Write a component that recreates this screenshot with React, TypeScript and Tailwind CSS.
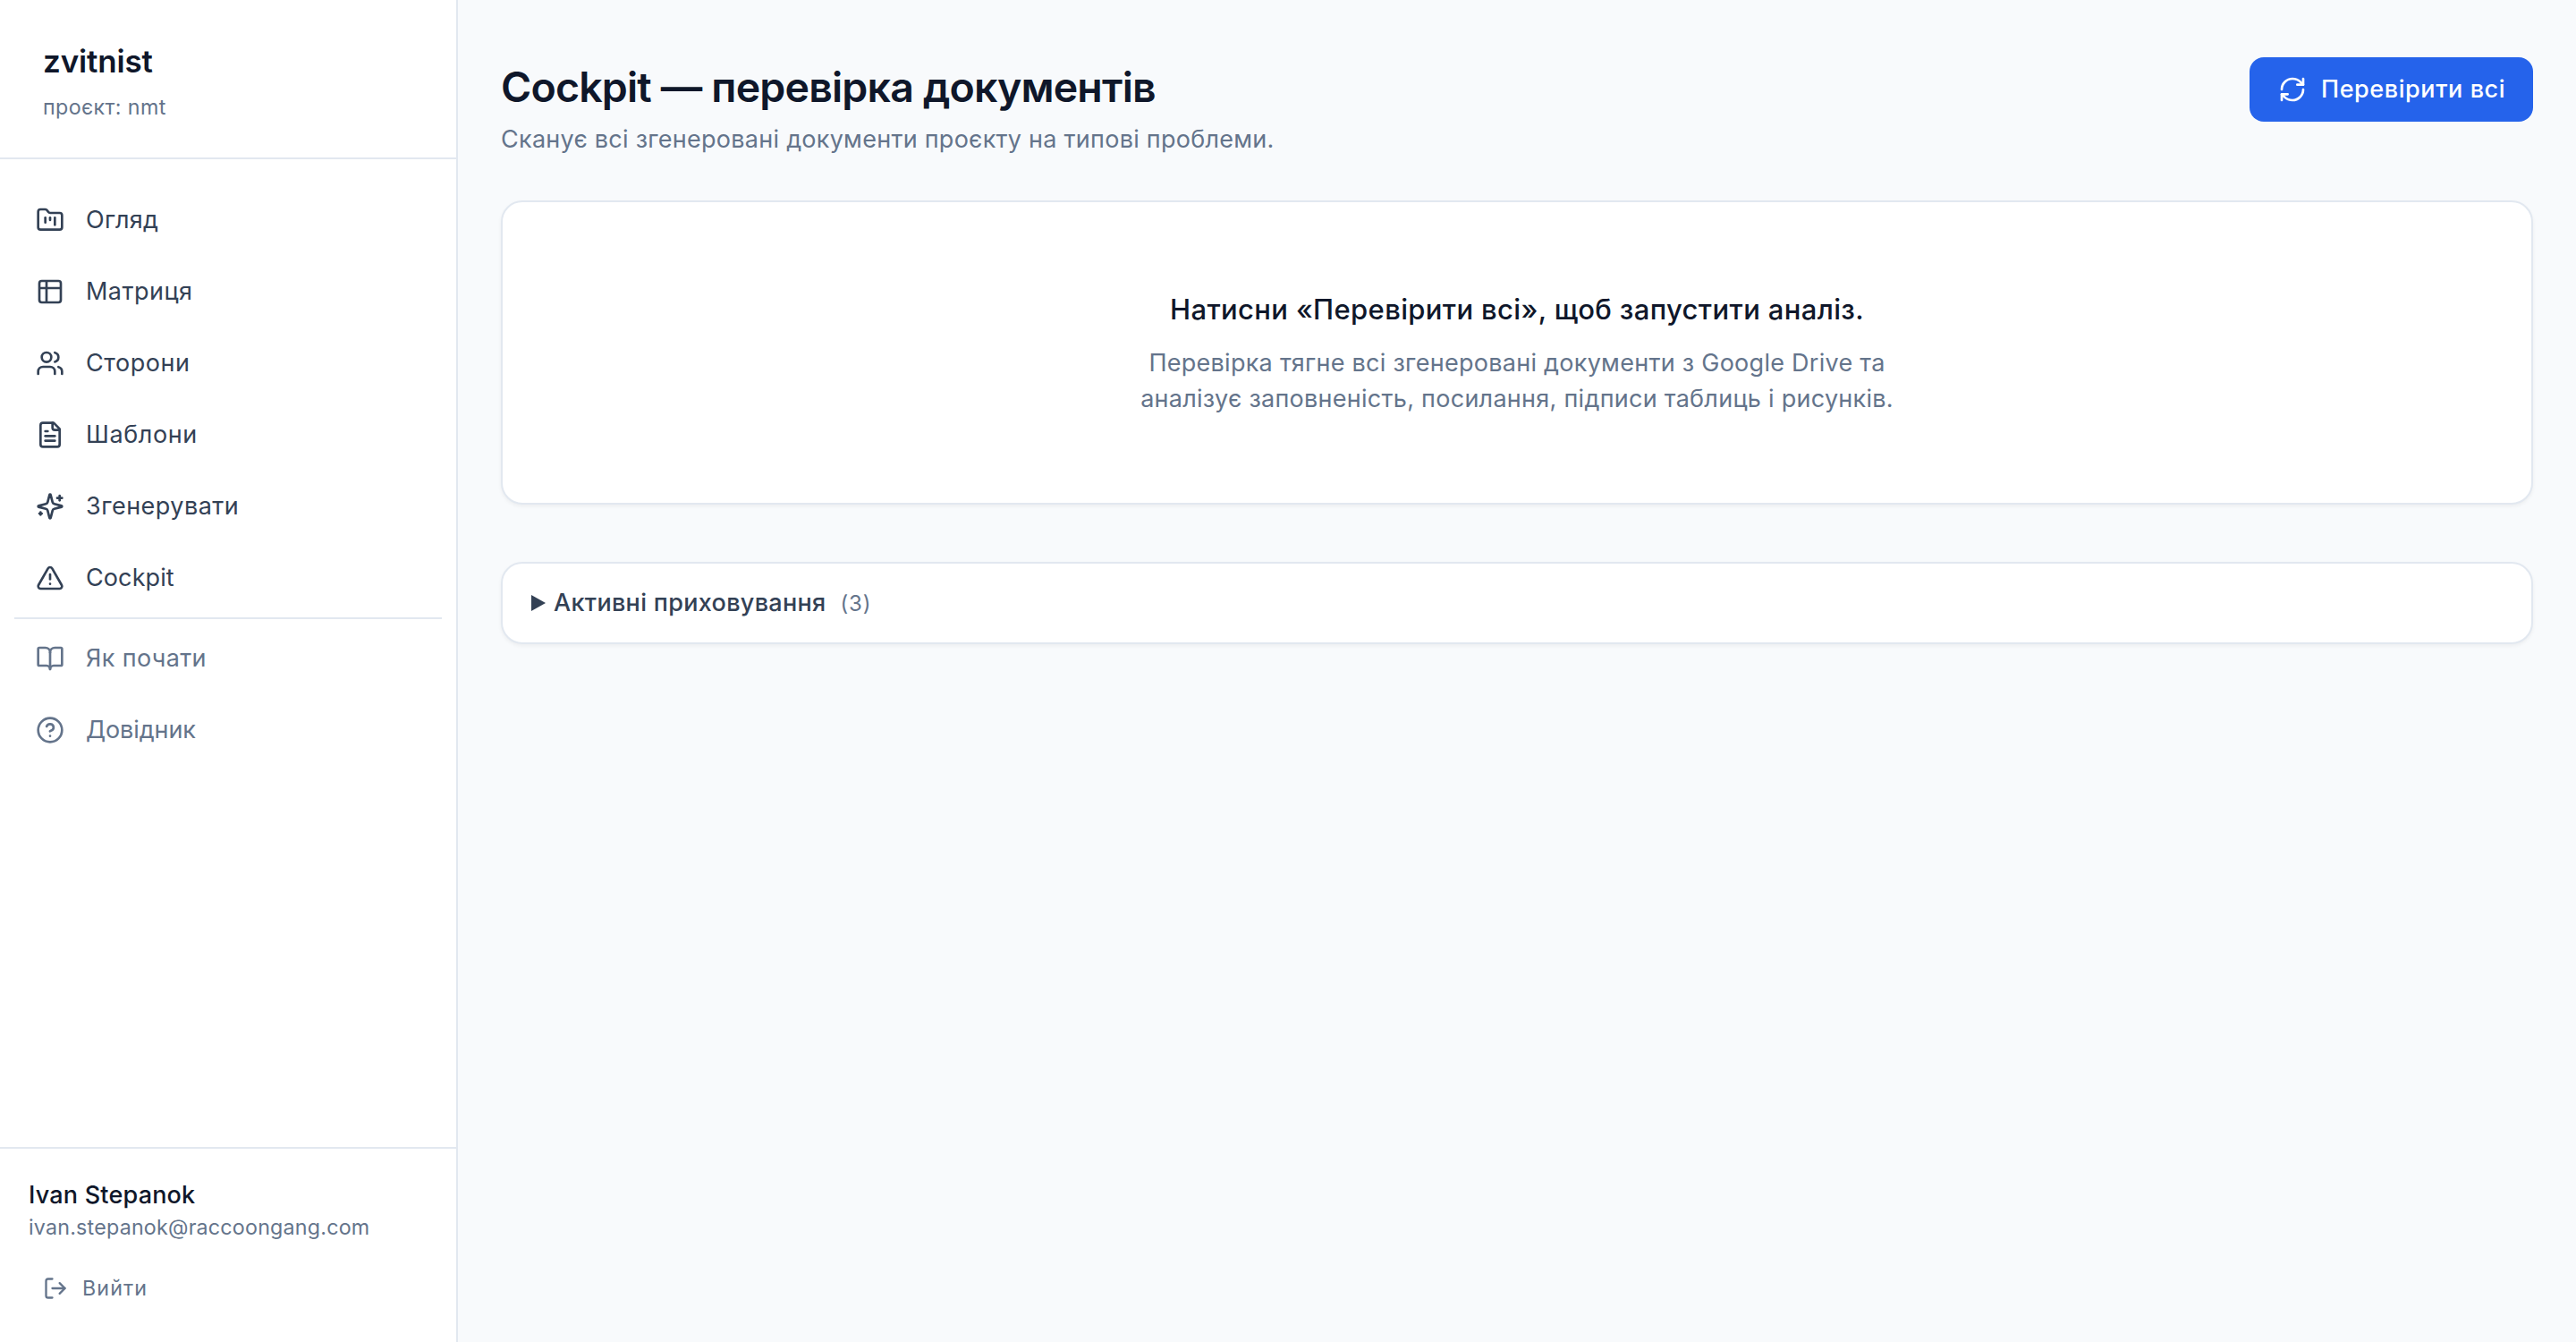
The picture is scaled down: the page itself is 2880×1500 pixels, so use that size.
import React from "react";
import { FolderKanban, Table2, Users, TriangleAlert, BookOpen, CircleHelp, LogOut, RefreshCw } from "lucide-react";

type IconType = React.ComponentType<{ className?: string }>;

const stroke = {
  viewBox: "0 0 24 24",
  fill: "none",
  stroke: "currentColor",
  strokeWidth: 2,
  strokeLinecap: "round",
  strokeLinejoin: "round",
} as const;

function Document({ className }: { className?: string }) {
  return (
    <svg {...stroke} className={className}>
      <path d="M15 2H6a2 2 0 0 0-2 2v16a2 2 0 0 0 2 2h12a2 2 0 0 0 2-2V7Z" />
      <path d="M14 2v4a2 2 0 0 0 2 2h4" />
      <path d="M10 9H8" />
      <path d="M16 13H8" />
      <path d="M16 17H8" />
    </svg>
  );
}

function Sparkles({ className }: { className?: string }) {
  return (
    <svg {...stroke} className={className}>
      <path d="M9.937 15.5A2 2 0 0 0 8.5 14.063l-6.135-1.582a.5.5 0 0 1 0-.962L8.5 9.936A2 2 0 0 0 9.937 8.5l1.582-6.135a.5.5 0 0 1 .963 0L14.063 8.5A2 2 0 0 0 15.5 9.937l6.135 1.581a.5.5 0 0 1 0 .964L15.5 14.063a2 2 0 0 0-1.437 1.437l-1.582 6.135a.5.5 0 0 1-.963 0z" />
      <path d="M20 3v4" />
      <path d="M22 5h-4" />
      <path d="M4 17v2" />
      <path d="M5 18H3" />
    </svg>
  );
}

type Item = { icon: IconType; label: string; tracking: string };

const mainItems: Item[] = [
  { icon: FolderKanban, label: "Огляд", tracking: "tracking-[0.25px]" },
  { icon: Table2, label: "Матриця", tracking: "tracking-[0.47px]" },
  { icon: Users, label: "Сторони", tracking: "tracking-[0.55px]" },
  { icon: Document, label: "Шаблони", tracking: "tracking-[0.6px]" },
  { icon: Sparkles, label: "Згенерувати", tracking: "tracking-[0.47px]" },
  { icon: TriangleAlert, label: "Cockpit", tracking: "tracking-[0.1px]" },
];

const helpItems: Item[] = [
  { icon: BookOpen, label: "Як почати", tracking: "tracking-[0.36px]" },
  { icon: CircleHelp, label: "Довідник", tracking: "tracking-[-0.1px]" },
];

function NavItem({ item: { icon: Icon, label, tracking }, color }: { item: Item; color: string }) {
  return (
    <a className={`flex h-[72px] items-center gap-6 rounded-xl px-6 text-[27px] leading-10 ${tracking} ${color}`}>
      <Icon className="size-8 shrink-0" />
      <span>{label}</span>
    </a>
  );
}

export default function App() {
  return (
    <div className="flex h-[1500px] w-[2880px] bg-[#f8fafc] font-['Inter',sans-serif] text-[#0f172a]">
      <aside className="flex w-[512px] shrink-0 flex-col border-r-2 border-[#e2e8f0] bg-white">
        <div className="h-[178px] border-b-2 border-[#e2e8f0] px-12 pt-10">
          <div className="text-[35px] leading-[56px] font-semibold tracking-[-0.17px]">zvitnist</div>
          <div className="mt-2 text-[23.25px] leading-8 tracking-[0.39px] text-[#64748b]">проєкт: nmt</div>
        </div>
        <nav className="flex flex-1 flex-col gap-2 px-4 pt-8">
          {mainItems.map((item) => <NavItem key={item.label} item={item} color="text-[#334155]" />)}
          <div className="border-t-2 border-[#e2e8f0]" />
          {helpItems.map((item) => <NavItem key={item.label} item={item} color="text-[#64748b]" />)}
        </nav>
        <div className="h-[218px] border-t-2 border-[#e2e8f0] px-8 pt-8">
          <div className="text-[27px] leading-10 font-medium tracking-[0.2px]">Ivan Stepanok</div>
          <div className="text-[23.25px] leading-8 tracking-[0.21px] text-[#64748b]">ivan.stepanok@raccoongang.com</div>
          <button className="mt-5 flex h-16 items-center gap-4 px-4 text-[23.25px] leading-8 tracking-[1.1px] text-[#64748b]">
            <LogOut className="size-7" />
            Вийти
          </button>
        </div>
      </aside>
      <main className="flex-1 px-12 pt-16">
        <header className="flex items-start justify-between">
          <div>
            <h1 className="pt-0.5 text-[46.5px] leading-[62px] font-semibold tracking-[-0.83px]">Cockpit — перевірка документів</h1>
            <p className="mt-2 text-[27px] leading-10 tracking-[0.26px] text-[#64748b]">Сканує всі згенеровані документи проєкту на типові проблеми.</p>
          </div>
          <button className="flex h-[72px] w-[317px] items-center gap-4 rounded-2xl bg-[#2563eb] px-8 text-[27px] leading-10 font-medium tracking-[0.57px] whitespace-nowrap text-white">
            <RefreshCw className="size-8 shrink-0" />
            Перевірити всі
          </button>
        </header>
        <section className="mt-12 flex h-[340px] flex-col items-center rounded-3xl border-2 border-[#e2e8f0] bg-white pt-24 text-center shadow-[0_2px_4px_rgba(0,0,0,0.05)]">
          <h2 className="text-[31px] leading-[48px] font-medium tracking-[0.35px]">Натисни «Перевірити всі», щоб запустити аналіз.</h2>
          <p className="mt-4 w-[896px] text-[27px] leading-10 tracking-[0.27px] text-[#64748b]">Перевірка тягне всі згенеровані документи з Google Drive та аналізує заповненість, посилання, підписи таблиць і рисунків.</p>
        </section>
        <details className="mt-16 h-[92px] rounded-3xl border-2 border-[#e2e8f0] bg-white px-8 pt-6 shadow-[0_2px_4px_rgba(0,0,0,0.05)]">
          <summary className="flex list-none items-baseline text-[27px] leading-10 font-medium tracking-[0.31px] text-[#334155]">
            <svg viewBox="0 0 16 18" className="mr-[9px] h-[18px] w-4" fill="currentColor">
              <path d="M0 0 16 9 0 18Z" />
            </svg>
            Активні приховування
            <span className="ml-4 text-[24px] font-normal tracking-[0.8px] text-[#64748b]">(3)</span>
          </summary>
        </details>
      </main>
    </div>
  );
}
